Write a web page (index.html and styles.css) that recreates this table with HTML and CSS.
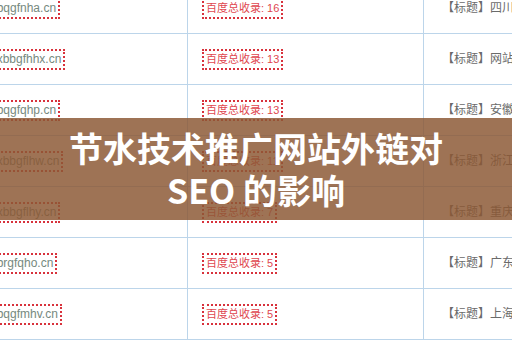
FILE: index.html
```html
<!DOCTYPE html>
<html lang="zh-CN">
<head>
<meta charset="utf-8">
<title>节水技术推广网站外链对 SEO 的影响</title>
<link rel="stylesheet" href="styles.css">
</head>
<body>
<div class="page">
  <div class="table">
    <div class="row">
      <div class="cell c1"><span class="box domain">www.bqgfnha.cn</span></div>
      <div class="cell c2"><span class="box count">百度总收录: 16</span></div>
      <div class="cell c3"><span class="title">【标题】四川新闻网站推广</span></div>
    </div>
    <div class="row">
      <div class="cell c1"><span class="box domain">www.xbbgfhhx.cn</span></div>
      <div class="cell c2"><span class="box count">百度总收录: 13</span></div>
      <div class="cell c3"><span class="title">【标题】网站的推广</span></div>
    </div>
    <div class="row">
      <div class="cell c1"><span class="box domain">www.bqgfqhp.cn</span></div>
      <div class="cell c2"><span class="box count">百度总收录: 13</span></div>
      <div class="cell c3"><span class="title">【标题】安徽新闻网站推广</span></div>
    </div>
    <div class="row">
      <div class="cell c1"><span class="box domain">www.xbbgflhw.cn</span></div>
      <div class="cell c2"><span class="box count">百度总收录: 11</span></div>
      <div class="cell c3"><span class="title">【标题】浙江新闻网站推广</span></div>
    </div>
    <div class="row">
      <div class="cell c1"><span class="box domain">www.xbbgflhy.cn</span></div>
      <div class="cell c2"><span class="box count">百度总收录: 7</span></div>
      <div class="cell c3"><span class="title">【标题】重庆新闻网站推广</span></div>
    </div>
    <div class="row">
      <div class="cell c1"><span class="box domain">www.brgfqho.cn</span></div>
      <div class="cell c2"><span class="box count">百度总收录: 5</span></div>
      <div class="cell c3"><span class="title">【标题】广东新闻网站推广</span></div>
    </div>
    <div class="row">
      <div class="cell c1"><span class="box domain">www.bqgfmhv.cn</span></div>
      <div class="cell c2"><span class="box count">百度总收录: 5</span></div>
      <div class="cell c3"><span class="title">【标题】上海新闻网站推广</span></div>
    </div>
  </div>
  <div class="banner">
    <h1 class="banner-title">节水技术推广网站外链对 SEO 的影响</h1>
  </div>
</div>
</body>
</html>
```

FILE: styles.css
```css
* { box-sizing: border-box; }
html, body {
  margin: 0;
  padding: 0;
  background: #fff;
}
body {
  width: 512px;
  height: 340px;
  overflow: hidden;
  font-family: "Liberation Sans", "Noto Sans CJK SC", sans-serif;
}
.page {
  position: relative;
  width: 512px;
  height: 340px;
  overflow: hidden;
}
.table {
  margin-top: -17px;
  display: flex;
  flex-direction: column;
}
.row {
  display: grid;
  grid-template-columns: 188px 236px 1fr;
  height: 51px;
  border-bottom: 1px solid #bcd5ea;
}
.cell {
  display: flex;
  align-items: center;
  overflow: hidden;
  white-space: nowrap;
  font-size: 12px;
  line-height: 15px;
}
.c1, .c2 { border-right: 1px solid #bcd5ea; }
.c1 { padding-left: 0; }
.c2 { padding-left: 14px; }
.c3 { padding-left: 18px; }
.box {
  display: inline-block;
  border: 2px dotted #d8323c;
  padding: 1px 2px;
}
.domain {
  margin-left: -36px;
  color: #76897e;
}
.count {
  color: #e0474f;
  font-size: 11px;
}
.title {
  color: #6a6a6a;
  font-size: 12px;
}
.banner {
  position: absolute;
  left: 0;
  top: 118px;
  width: 512px;
  height: 102px;
  background: rgba(140, 88, 52, 0.84);
  display: flex;
  align-items: center;
  justify-content: center;
}
.banner-title {
  margin: 0;
  width: 400px;
  text-align: center;
  color: #fff;
  font-family: "Noto Sans CJK SC", sans-serif;
  font-weight: 700;
  font-size: 34px;
  line-height: 42px;
}
```
